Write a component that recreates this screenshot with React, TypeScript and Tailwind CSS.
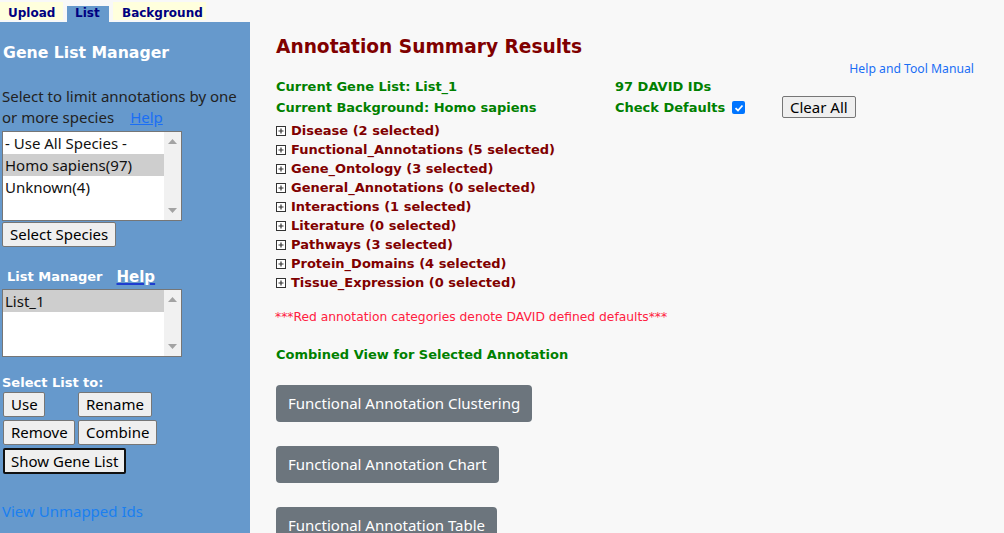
import React from 'react';

const verdana = { fontFamily: '"DejaVu Sans", Verdana, sans-serif' };
const segoe = { fontFamily: '"Noto Sans", "Open Sans", sans-serif' };

const categories = [
  'Disease (2 selected)',
  'Functional_Annotations (5 selected)',
  'Gene_Ontology (3 selected)',
  'General_Annotations (0 selected)',
  'Interactions (1 selected)',
  'Literature (0 selected)',
  'Pathways (3 selected)',
  'Protein_Domains (4 selected)',
  'Tissue_Expression (0 selected)',
];

const PlusBox = () => (
  <svg width="10" height="10" viewBox="0 0 10 10" className="shrink-0">
    <rect x="0.5" y="0.5" width="9" height="9" fill="#fff" stroke="#333" />
    <path d="M2.5 5h5M5 2.5v5" stroke="#333" strokeWidth="1.2" />
  </svg>
);

const Scrollbar = () => (
  <div className="w-[17px] bg-[#f1f1f1] flex flex-col justify-between items-center py-[7px]">
    <svg width="9" height="5" viewBox="0 0 9 5">
      <path d="M0 5L4.5 0L9 5z" fill="#a3a3a3" />
    </svg>
    <svg width="9" height="5" viewBox="0 0 9 5">
      <path d="M0 0L4.5 5L9 0z" fill="#a3a3a3" />
    </svg>
  </div>
);

const NativeButton = ({ label, className = '' }: { label: string; className?: string }) => (
  <button
    className={`bg-[#efefef] border border-[#767676] rounded-[2px] text-[15px] font-normal leading-[21px] text-black px-[7px] py-[1px] whitespace-nowrap ${className}`}
    style={segoe}
  >
    {label}
  </button>
);

const ListBox = ({ items, selected, height }: { items: string[]; selected: number; height: string }) => (
  <div className={`ml-[2px] w-[180px] ${height} bg-white border border-[#767676] flex`}>
    <div className="flex-1 flex flex-col" style={segoe}>
      {items.map((it, i) => (
        <div
          key={it}
          className={`h-[22px] pl-[2px] text-[15px] leading-[22px] text-[#111] ${i === selected ? 'bg-[#cecece]' : ''}`}
        >
          {it}
        </div>
      ))}
    </div>
    <Scrollbar />
  </div>
);

const FuncButton = ({ label }: { label: string }) => (
  <button
    className="bg-[#6c757d] text-white rounded-[4px] text-[15px] h-[37px] px-[12px] leading-[37px] self-start shrink-0"
    style={segoe}
  >
    {label}
  </button>
);

export default function App() {
  return (
    <div className="w-[1004px] h-[533px] overflow-hidden bg-[#f8f8f8] flex flex-col">
      <div className="h-[22px] shrink-0 flex items-end text-[12px] font-bold text-[#000080]" style={verdana}>
        <div className="h-[18px] w-[63px] bg-[#ffffdd] pl-[8px] pt-[4px] leading-[14px] mb-[2px]">Upload</div>
        <div className="h-[16px] w-[42px] ml-[4px] bg-[#6699cc] pl-[8px] leading-[14px]">List</div>
        <div className="h-[18px] w-[93px] ml-[4px] bg-[#ffffdd] pl-[9px] pt-[4px] leading-[14px] mb-[2px]">
          Background
        </div>
      </div>
      <div className="flex flex-1 min-h-0">
        <aside className="w-[250px] shrink-0 bg-[#6699cc] flex flex-col">
          <h2 className="mt-[20px] ml-[3px] text-white text-[15.7px] font-bold leading-[22px]" style={verdana}>
            Gene List Manager
          </h2>
          <p className="mt-[22px] ml-[2px] text-[15px] leading-[21px] text-[#222] pr-[6px]" style={segoe}>
            Select to limit annotations by one or more species
            <a className="ml-[16px] text-[#1a6ef5] underline">Help</a>
          </p>
          <div className="mt-[3px]">
            <ListBox
              items={['- Use All Species -', 'Homo sapiens(97)', 'Unknown(4)']}
              selected={1}
              height="h-[90px]"
            />
          </div>
          <div className="ml-[2px] mt-[1px]">
            <NativeButton label="Select Species" />
          </div>
          <div className="mt-[21px] ml-[7px] flex items-end text-white font-bold" style={verdana}>
            <span className="text-[13px] leading-[18px]">List Manager</span>
            <span className="ml-[14px] text-[15px] leading-[18px] underline decoration-[#1e3cd0] decoration-2">
              Help
            </span>
          </div>
          <div className="mt-[3px]">
            <ListBox items={['List_1']} selected={0} height="h-[68px]" />
          </div>
          <div className="mt-[17px] ml-[2px] text-white font-bold text-[13px] leading-[17px]" style={verdana}>
            Select List to:
          </div>
          <div className="ml-[3px] mt-[1px] flex flex-col gap-[3px]">
            <div className="flex">
              <NativeButton label="Use" className="w-[42px]" />
              <NativeButton label="Rename" className="ml-[33px]" />
            </div>
            <div className="flex gap-[3px]">
              <NativeButton label="Remove" className="w-[72px]" />
              <NativeButton label="Combine" />
            </div>
            <div className="flex">
              <button
                className="bg-[#efefef] border-2 border-[#111] rounded-[2px] text-[15px] leading-[20px] text-black px-[6px] py-[1px]"
                style={segoe}
              >
                Show Gene List
              </button>
            </div>
          </div>
          <a className="mt-[26px] ml-[2px] text-[15px] text-[#1a7ff0]" style={segoe}>
            View Unmapped Ids
          </a>
        </aside>
        <main className="flex-1 pl-[26px] pr-[30px] flex flex-col" style={verdana}>
          <h1 className="mt-[13px] text-[18.6px] font-bold text-[#800000] leading-[24px]">Annotation Summary Results</h1>
          <div className="mt-[2px] h-[15px] flex justify-end">
            <a className="text-[12.2px] text-[#1a6ef5] leading-[15px]" style={segoe}>
              Help and Tool Manual
            </a>
          </div>
          <div className="h-[42px] shrink-0 flex text-[13px] font-bold text-[#008000] leading-[21px]">
            <div className="w-[339px]">
              <div>Current Gene List: List_1</div>
              <div>Current Background: Homo sapiens</div>
            </div>
            <div className="w-[167px]">
              <div>97 DAVID IDs</div>
              <div className="flex items-center">
                Check Defaults
                <span className="ml-[7px] w-[13px] h-[13px] rounded-[2px] bg-[#0075ff] flex items-center justify-center">
                  <svg width="10" height="10" viewBox="0 0 10 10">
                    <path d="M1.5 5.2L4 7.5L8.5 2.5" stroke="#fff" strokeWidth="1.8" fill="none" />
                  </svg>
                </span>
              </div>
            </div>
            <div className="pt-[20px]">
              <NativeButton
                label="Clear All"
                className="text-[14.5px] h-[22px] leading-[16px] px-[6px] py-0 flex items-center"
              />
            </div>
          </div>
          <ul className="mt-[3px] flex flex-col">
            {categories.map((c) => (
              <li key={c} className="flex items-center h-[19px] gap-[5px]">
                <PlusBox />
                <span className="text-[13px] font-bold text-[#800000]">{c}</span>
              </li>
            ))}
          </ul>
          <p className="mt-[16px] text-[12.3px] text-[#ff2040] -ml-[1px]">
            ***Red annotation categories denote DAVID defined defaults***
          </p>
          <p className="mt-[19px] text-[13px] font-bold text-[#008000]">Combined View for Selected Annotation</p>
          <div className="mt-[20px] flex flex-col gap-[24px]">
            <FuncButton label="Functional Annotation Clustering" />
            <FuncButton label="Functional Annotation Chart" />
            <FuncButton label="Functional Annotation Table" />
          </div>
        </main>
      </div>
    </div>
  );
}
